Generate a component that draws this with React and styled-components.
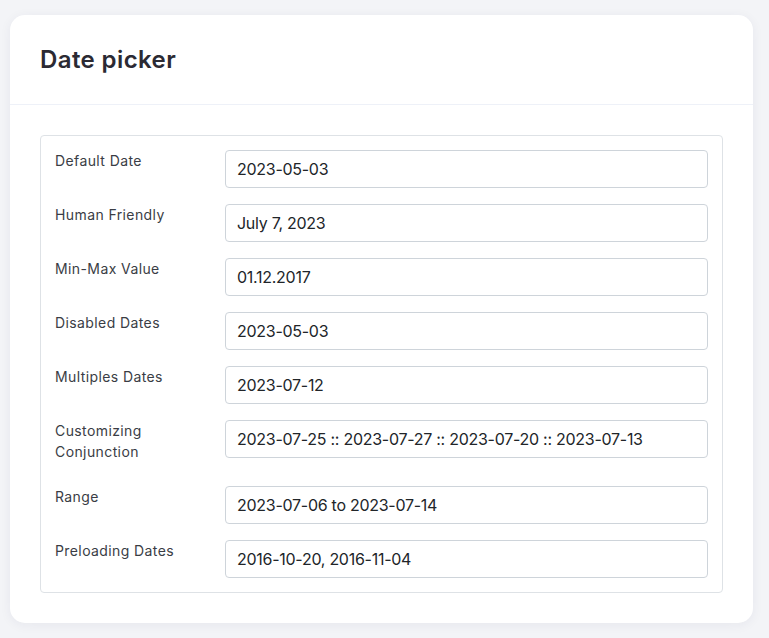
import React from 'react';
import styled, { createGlobalStyle } from 'styled-components';

const GlobalStyle = createGlobalStyle`
    html, body {
        margin: 0;
        padding: 0;
        background-color: #f3f4f7;
        font-family: Inter, "Noto Sans", sans-serif;
    }
`;

const rows = [
    { label: 'Default Date', value: '2023-05-03' },
    { label: 'Human Friendly', value: 'July 7, 2023' },
    { label: 'Min-Max Value', value: '01.12.2017' },
    { label: 'Disabled Dates', value: '2023-05-03' },
    { label: 'Multiples Dates', value: '2023-07-12' },
    { label: 'Customizing Conjunction', value: '2023-07-25 :: 2023-07-27 :: 2023-07-20 :: 2023-07-13' },
    { label: 'Range', value: '2023-07-06 to 2023-07-14' },
    { label: 'Preloading Dates', value: '2016-10-20, 2016-11-04' },
];

function App() {
    return (
        <Page>
            <GlobalStyle />
            <Card>
                <CardHeader>
                    <Title>Date picker</Title>
                </CardHeader>
                <CardBody>
                    <FormBox>
                        {rows.map(row => (
                            <Row key={row.label}>
                                <Label>{row.label}</Label>
                                <Input readOnly value={row.value} />
                            </Row>
                        ))}
                    </FormBox>
                </CardBody>
            </Card>
        </Page>
    );
}

export default App;

const Page = styled.div`
    padding: 15px 16px 16px 10px;
    min-height: 638px;
    box-sizing: border-box;
`;

const Card = styled.div`
    width: 743px;
    background-color: #fff;
    border-radius: 15px;
    box-shadow: 0 2px 12px rgba(30, 40, 80, 0.06);
`;

const CardHeader = styled.div`
    padding: 30px;
    border-bottom: 1px solid #eef1f8;
`;

const Title = styled.h4`
    margin: 0;
    font-size: 24px;
    line-height: 29px;
    font-weight: 600;
    letter-spacing: 0.4px;
    color: #2b2a33;
`;

const CardBody = styled.div`
    padding: 30px;
`;

const FormBox = styled.div`
    border: 1px solid #dee2e6;
    border-radius: 4px;
    padding: 14px;
    display: flex;
    flex-direction: column;
    gap: 16px;
`;

const Row = styled.div`
    display: grid;
    grid-template-columns: 170px 1fr;
    align-items: start;
`;

const Label = styled.label`
    font-size: 14px;
    line-height: 21px;
    letter-spacing: 0.4px;
    color: #3a3d45;
    padding-right: 40px;
    margin-bottom: 8px;
`;

const Input = styled.input`
    box-sizing: border-box;
    width: 100%;
    height: 38px;
    border: 1px solid #ced4da;
    border-radius: 4px;
    padding: 0 11px;
    font-family: inherit;
    font-size: 16px;
    letter-spacing: -0.27px;
    color: #212529;
    outline: none;
`;
